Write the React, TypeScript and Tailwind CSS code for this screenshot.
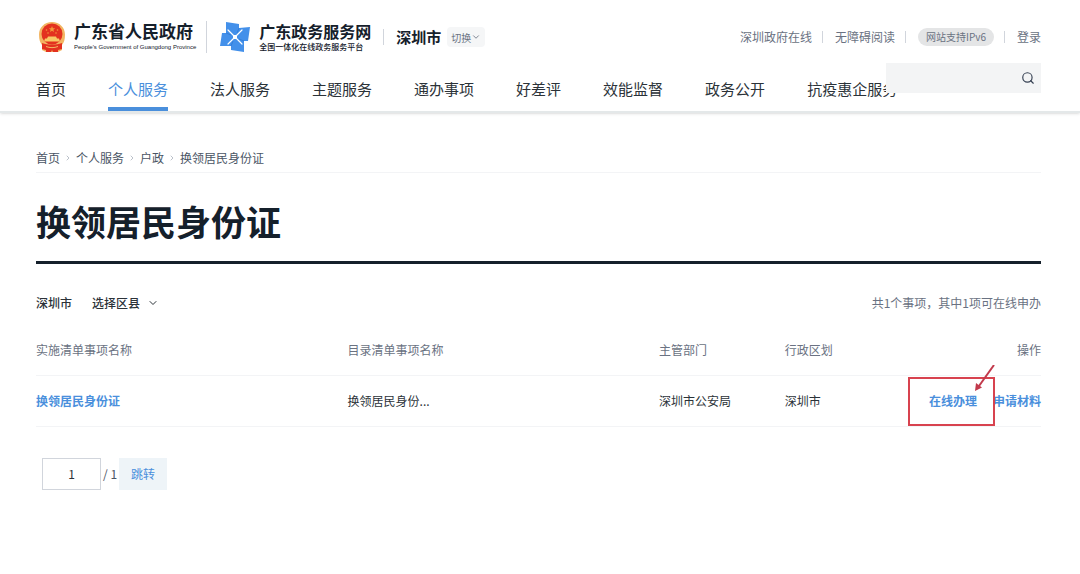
import { ChevronDown, ChevronRight, Search } from 'lucide-react';

const navItems = [
  '首页',
  '个人服务',
  '法人服务',
  '主题服务',
  '通办事项',
  '好差评',
  '效能监督',
  '政务公开',
  '抗疫惠企服务',
];

const breadcrumbs = ['首页', '个人服务', '户政', '换领居民身份证'];

const Emblem = () => (
  <svg className="w-7 h-8 shrink-0" viewBox="0 0 28 32" aria-hidden="true">
    <path
      d="M14 1C6.500 1 1 6.500 1 13.500c0 5 1 8 3 10.500v5l4 2h12l4-2v-5c2-2.500 3-5.500 3-10.500C27 6.500 21.500 1 14 1z"
      fill="#f3b562"
    />
    <circle cx="14" cy="13" r="10.500" fill="#e3311f" />
    <path
      d="M14 5l.9 2.200 2.300.1-1.800 1.500.6 2.300-2-1.300-2 1.300.6-2.300-1.800-1.500 2.300-.1z"
      fill="#f29a3c"
    />
    <g fill="#f29a3c">
      <circle cx="8.500" cy="9" r=".8" />
      <circle cx="10" cy="12" r=".8" />
      <circle cx="18" cy="12" r=".8" />
      <circle cx="19.500" cy="9" r=".8" />
    </g>
    <path d="M10 15.500h8l1 2h2l1 3H6l1-3h2z" fill="#f8c865" />
    <path d="M4 22c6 2 14 2 20 0v6l-4 1v2h-5l-1-2-1 2H8v-2l-4-1z" fill="#e3311f" />
    <path d="M8 25.500c4 1.500 8 1.500 12 0" stroke="#f3b562" fill="none" />
  </svg>
);

const Pinwheel = () => (
  <svg className="size-8 shrink-0" viewBox="0 0 32 32" aria-hidden="true">
    <path
      d="M7 1l13 2v4l11-1-2 14h-4v11l-13-2v-4H1l2-13h4z"
      fill="#4390ea"
    />
    <path
      d="M9 9l14 14M23 9L9 23"
      stroke="#fff"
      strokeWidth="1.200"
      strokeLinecap="round"
    />
    <path
      d="M20 7l-2 5M25 20l-5-2M12 25l2-5M7 12l5 2"
      stroke="#2f78d4"
      strokeWidth=".8"
    />
    <rect x="14" y="14" width="4" height="4" rx="1" fill="#fff" />
  </svg>
);

const Header = () => (
  <header className="relative border-b-2 border-[#e4e8e9] pl-9 pr-[39px] shadow-sm">
    <div className="flex items-center justify-between h-[74px]">
      <div className="flex items-center">
        <a href="#gov" className="flex items-center gap-2 pl-0.5">
          <Emblem />
          <span className="flex flex-col">
            <span className="text-[17px] leading-5 font-bold">
              广东省人民政府
            </span>
            <span className="text-[6px] leading-3 whitespace-nowrap font-['Liberation_Sans',sans-serif]">
              People's Government of Guangdong Province
            </span>
          </span>
        </a>
        <span className="w-px h-8 bg-gray-300 ml-2.5 mr-3" />
        <a href="#service" className="flex items-center gap-2">
          <Pinwheel />
          <span className="flex flex-col">
            <span className="text-[16px] leading-5 font-bold">
              广东政务服务网
            </span>
            <span className="text-[8px] leading-3 font-medium">
              全国一体化在线政务服务平台
            </span>
          </span>
        </a>
        <span className="w-px h-4 bg-gray-300 ml-3 mr-3" />
        <span className="text-[15px] font-bold">深圳市</span>
        <button
          type="button"
          className="flex items-center ml-1.5 px-1 h-5 text-[10px] text-gray-500 bg-[#f5f6f7] rounded-sm"
        >
          切换
          <ChevronDown className="size-2.5" />
        </button>
      </div>

      <div className="flex items-center text-xs text-gray-500">
        <a href="#online">深圳政府在线</a>
        <span className="w-px h-3 bg-gray-300 ml-2.5 mr-3" />
        <a href="#accessible">无障碍阅读</a>
        <span className="w-px h-3 bg-gray-300 ml-2.5 mr-3" />
        <span className="rounded-full bg-[#e4e5e6] px-2 text-[10px] leading-[18px]">
          网站支持IPv6
        </span>
        <span className="w-px h-3 bg-gray-300 ml-2.5 mr-3" />
        <a href="#login">登录</a>
      </div>
    </div>

    <nav className="flex gap-[42px] text-[15px] leading-[30px] whitespace-nowrap">
      {navItems.map((item) => (
        <a
          key={item}
          href="#nav"
          className={
            item === '个人服务'
              ? 'border-b-4 border-[#4a8fdc] pb-[3px] text-[#4a8fdc]'
              : 'border-b-4 border-transparent pb-[3px] text-[#2b3238]'
          }
        >
          {item}
        </a>
      ))}
    </nav>

    {/* Search box floats over the end of the nav */}
    <form className="absolute right-[39px] top-[63px] flex items-center w-[155px] h-[30px] bg-[#f3f4f5]">
      <input
        type="text"
        aria-label="搜索"
        className="w-full min-w-0 flex-1 px-2 text-xs outline-none"
      />
      <button type="button" aria-label="搜索" className="pr-1.5">
        <Search className="size-3.5 text-gray-700" />
      </button>
    </form>
  </header>
);

const App = () => {
  return (
    <div className="bg-white text-[#15202b] font-['Noto_Sans_CJK_SC',sans-serif]">
      <Header />

      <main className="pl-9 pr-[39px]">
        <div className="flex items-center pt-[35px] pb-1 text-xs leading-5 text-gray-600 border-b border-gray-100">
          {breadcrumbs.map((crumb, index) => (
            <span key={crumb} className="flex items-center">
              {index > 0 && (
                <ChevronRight className="size-2 mx-1 text-gray-400" />
              )}
              <a href="#crumb">{crumb}</a>
            </span>
          ))}
        </div>

        <h1 className="pt-[22px] pb-3.5 text-[35px] leading-[52px] font-bold border-b-3 border-[#15202b]">
          换领居民身份证
        </h1>

        <div className="flex items-center justify-between mt-[29px] text-xs leading-5">
          <div className="flex items-center gap-5 font-medium text-[#2b3238]">
            <span>深圳市</span>
            <div className="relative flex items-center">
              <select
                aria-label="选择区县"
                className="appearance-none pr-5 leading-5 outline-none"
              >
                <option>选择区县</option>
              </select>
              <ChevronDown className="absolute right-0.5 size-3 pointer-events-none" />
            </div>
          </div>
          <p className="text-gray-500">共1个事项，其中1项可在线申办</p>
        </div>

        <table className="w-full mt-3 table-fixed text-left text-xs">
          <thead>
            <tr className="h-[50px] border-b border-gray-100 text-gray-500">
              <th className="w-[31%] font-normal">实施清单事项名称</th>
              <th className="w-[31%] font-normal">目录清单事项名称</th>
              <th className="w-1/8 font-normal">主管部门</th>
              <th className="w-1/8 font-normal">行政区划</th>
              <th className="font-normal text-right">操作</th>
            </tr>
          </thead>
          <tbody>
            <tr className="h-[51px] border-b border-gray-100 text-[#2b3238]">
              <td>
                <a href="#item" className="font-bold text-[#4a8fdc]">
                  换领居民身份证
                </a>
              </td>
              <td>换领居民身份...</td>
              <td>深圳市公安局</td>
              <td>深圳市</td>
              <td>
                <div className="flex justify-end gap-4 font-bold text-[#4a8fdc]">
                  <span className="relative">
                    <a href="#apply">在线办理</a>
                    <svg
                      className="absolute -right-[18px] -top-7 w-[87px] h-[62px] pointer-events-none"
                      viewBox="0 0 87 62"
                      aria-hidden="true"
                    >
                      <rect
                        x="1"
                        y="13"
                        width="85"
                        height="47"
                        fill="none"
                        stroke="#d8434f"
                        strokeWidth="2"
                      />
                      <path d="M86 0L71 21" stroke="#c23a4c" strokeWidth="2" />
                      <path d="M67 26l1-8 6 4.500z" fill="#c23a4c" />
                    </svg>
                  </span>
                  <a href="#materials">申请材料</a>
                </div>
              </td>
            </tr>
          </tbody>
        </table>

        <form className="flex items-center gap-0.5 mt-[31px] ml-1.5 mb-8 text-xs text-gray-600">
          <input
            type="text"
            aria-label="页码"
            defaultValue="1"
            className="w-[59px] h-8 text-center text-[#2b3238] border border-gray-300 outline-none"
          />
          <span>/ 1</span>
          <button
            type="button"
            className="w-12 h-8 text-[#4a8fdc] bg-[#eef4f8]"
          >
            跳转
          </button>
        </form>
      </main>
    </div>
  );
};

export default App;
